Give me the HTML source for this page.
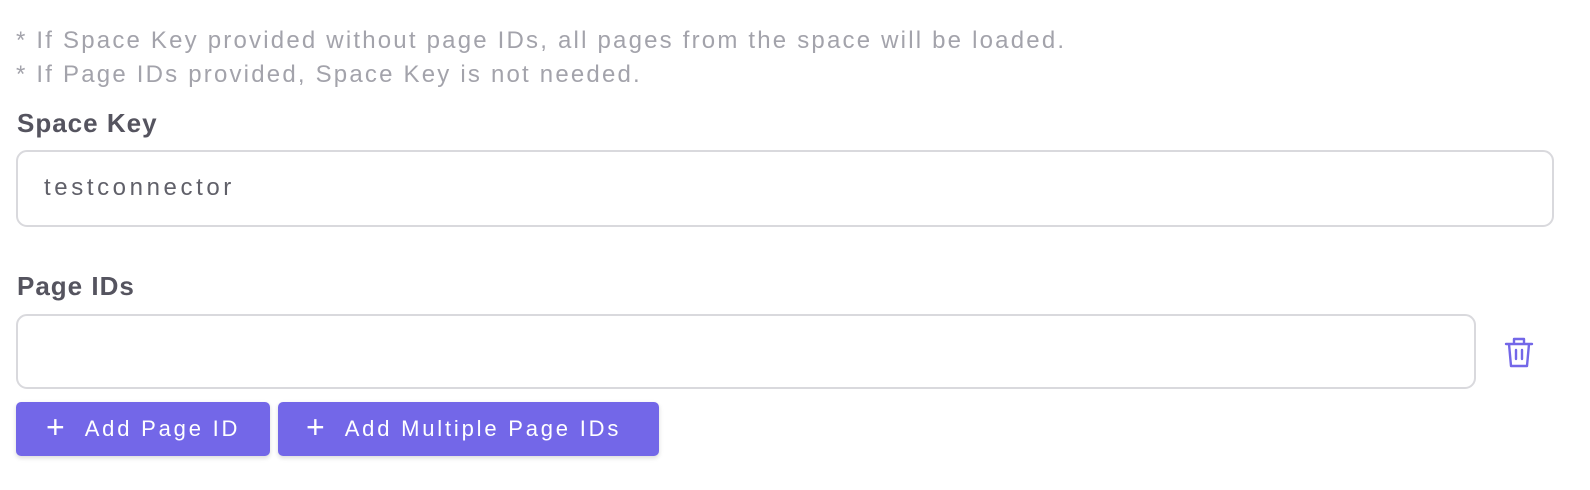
<!DOCTYPE html>
<html><head><style>
body{margin:0;width:1590px;height:490px;background:#fff;font-family:"Liberation Sans",sans-serif;position:relative;overflow:hidden}
.a{position:absolute;white-space:nowrap}
.hint{color:#a3a3ab;font-size:24px;left:16px;letter-spacing:2.2px}
.lab{color:#55545f;font-size:26px;font-weight:600;left:17px;letter-spacing:1px}
.inp{border:2px solid #d9d9dd;border-radius:11px;box-sizing:border-box;left:16px}
.btn{background:#7367e8;color:#fff;border-radius:5px;font-size:22px;top:402px;height:54px;display:flex;align-items:center;box-sizing:border-box;box-shadow:0 2px 5px rgba(0,0,0,.15);letter-spacing:2.8px}
</style></head><body>
<div class="a hint" style="top:27px">* If Space Key provided without page IDs, all pages from the space will be loaded.</div>
<div class="a hint" style="top:61px">* If Page IDs provided, Space Key is not needed.</div>
<div class="a lab" style="top:108px">Space Key</div>
<div class="a inp" style="top:150px;width:1538px;height:77px"></div>
<div class="a" style="left:44px;top:174px;font-size:24px;color:#606069;letter-spacing:3.6px">testconnector</div>
<div class="a lab" style="top:271px">Page IDs</div>
<div class="a inp" style="top:314px;width:1460px;height:75px"></div>
<svg class="a" style="left:1503px;top:336px" width="32" height="34" viewBox="0 0 32 34" fill="none" stroke="#7367e8" stroke-width="2.4" stroke-linecap="round" stroke-linejoin="round"><path d="M3 8h26M11 8V3h10v5M6 8l2 22h16l2-22M13 14v9M19 14v9"/></svg>
<div class="a btn" style="left:16px;width:254px;padding-left:30px"><span style="font-size:32px;font-weight:300;margin-right:20px;margin-top:-4px;letter-spacing:0">+</span>Add Page ID</div>
<div class="a btn" style="left:278px;width:381px;padding-left:28px"><span style="font-size:32px;font-weight:300;margin-right:20px;margin-top:-4px;letter-spacing:0">+</span>Add Multiple Page IDs</div>
</body></html>
